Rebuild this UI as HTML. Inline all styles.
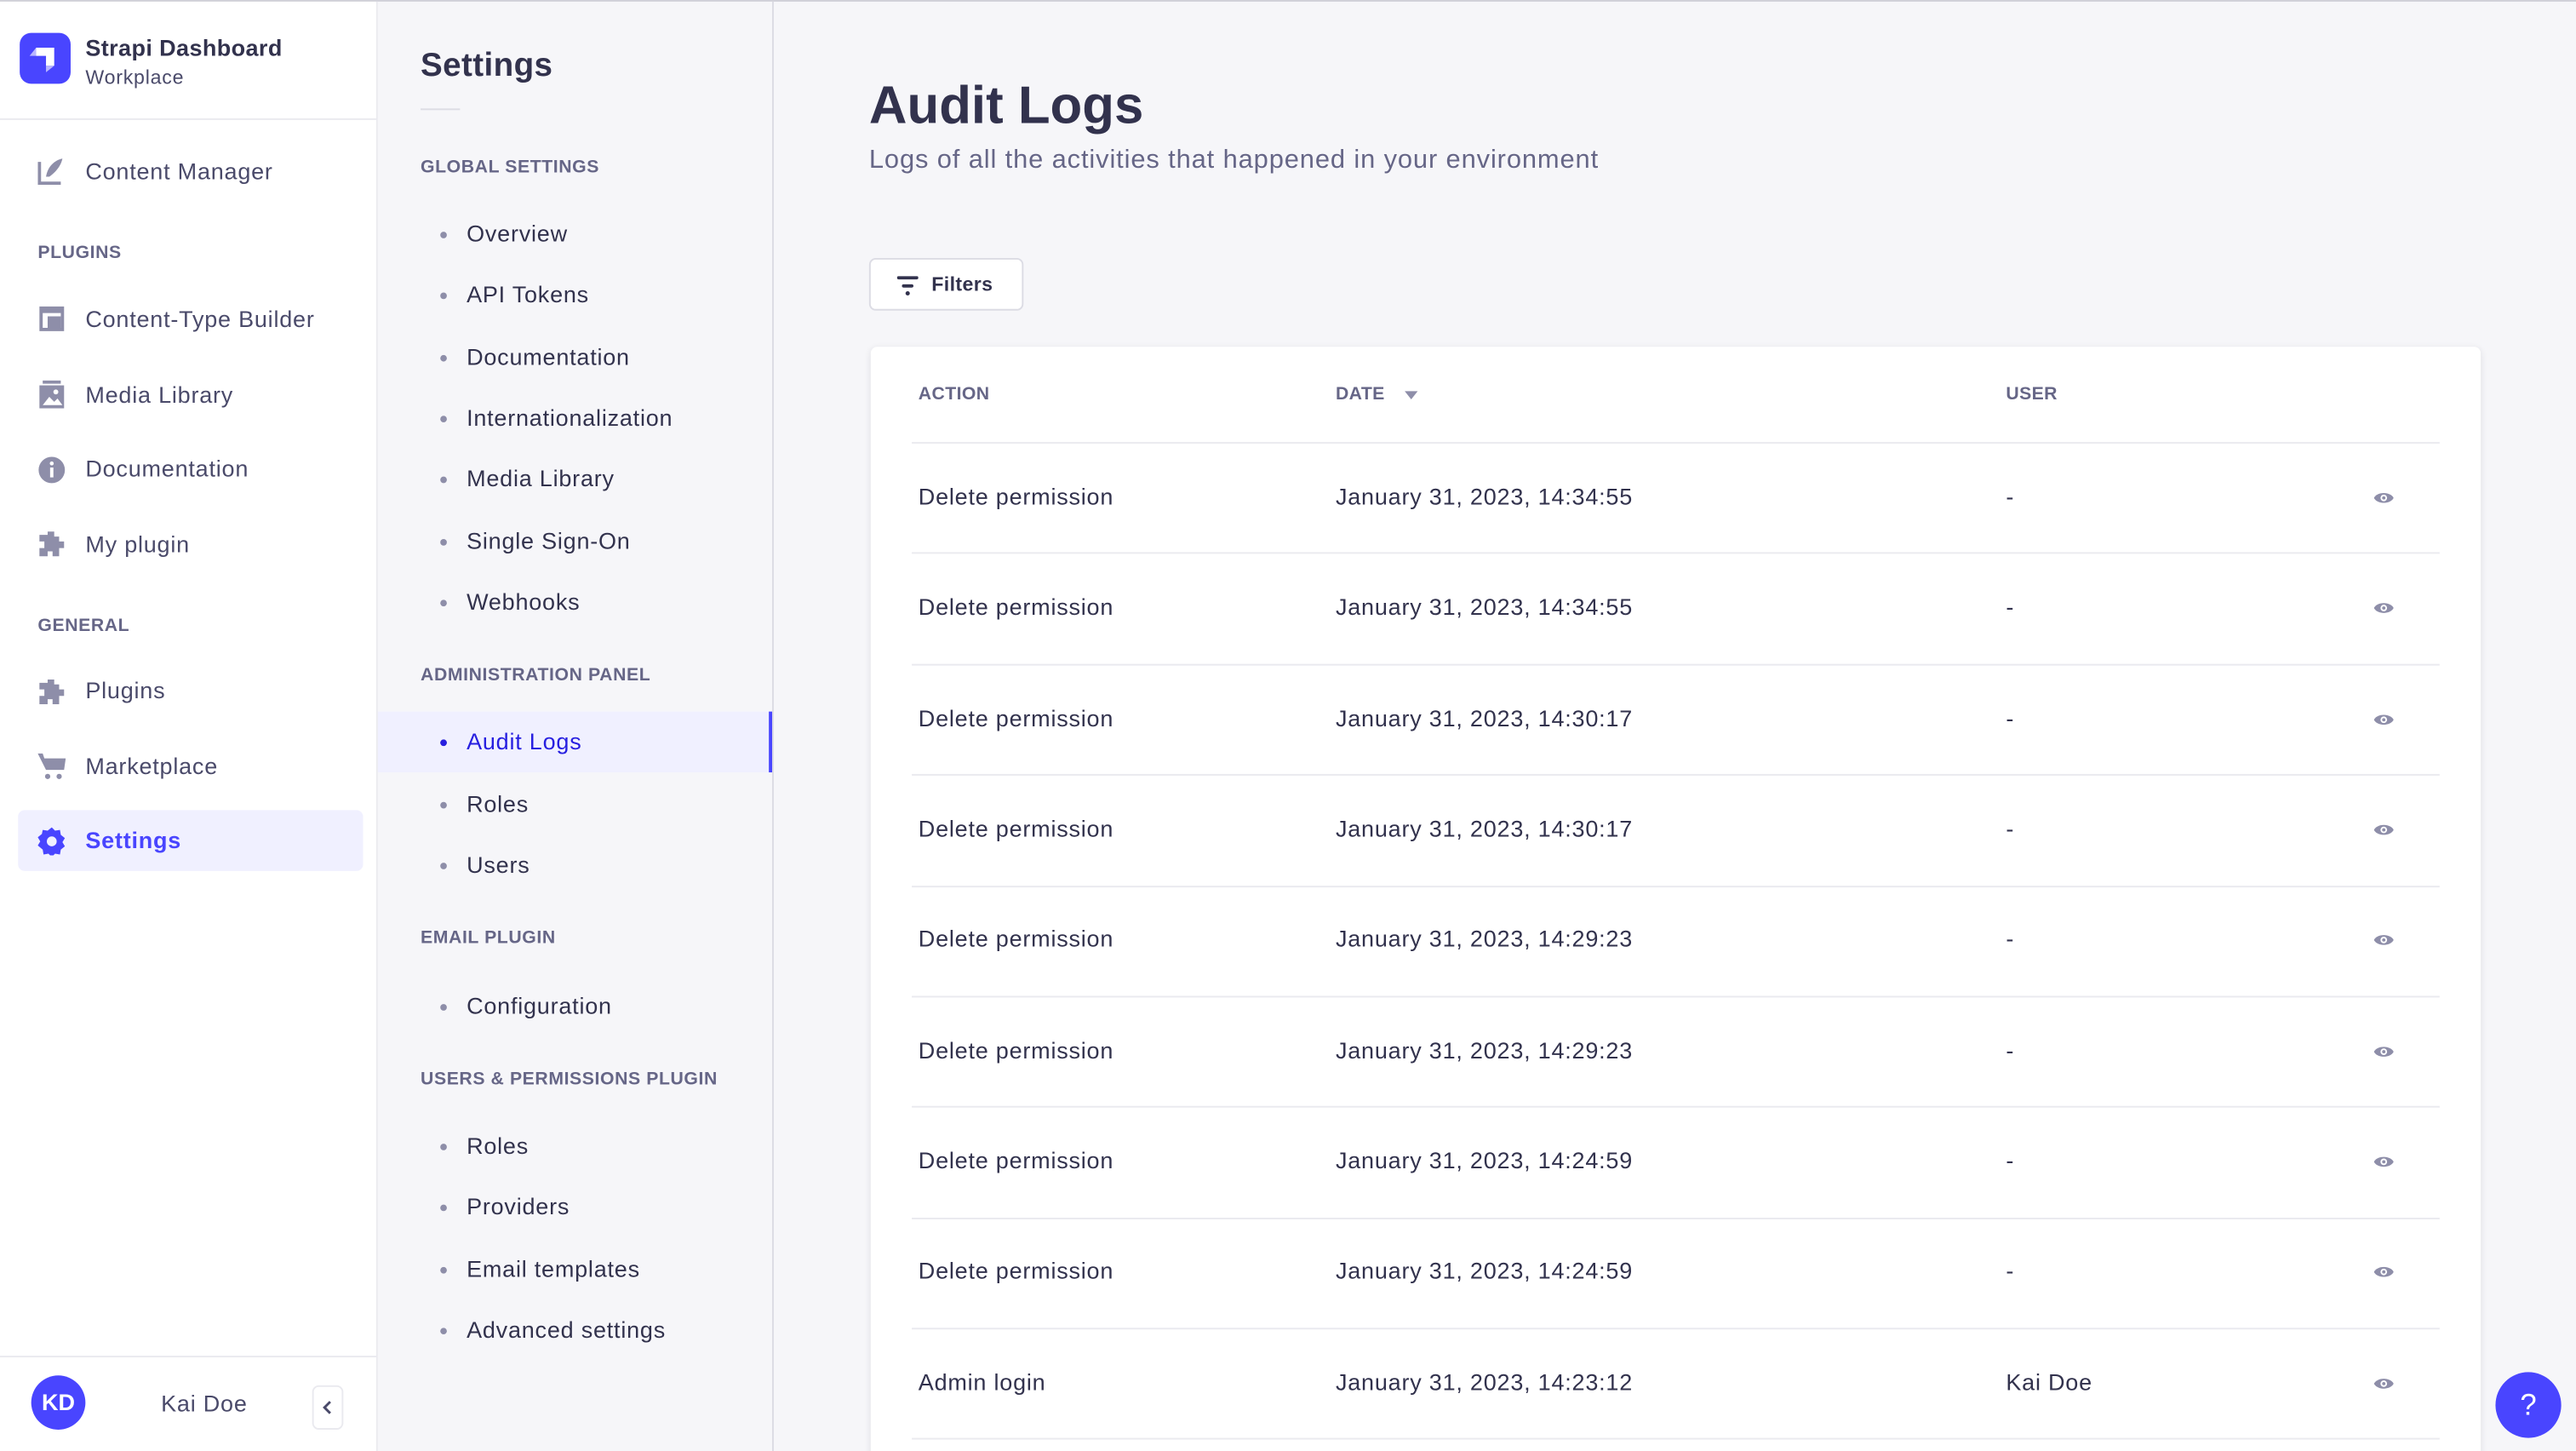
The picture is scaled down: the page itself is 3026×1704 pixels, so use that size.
<!DOCTYPE html>
<html><head><meta charset="utf-8">
<style>
*{box-sizing:border-box;margin:0;padding:0}
html,body{width:3026px;height:1704px;overflow:hidden;background:#f6f6f9}
#w{width:1568px;height:883px;transform:scale(1.92985);transform-origin:0 0;position:relative;font-family:"Liberation Sans",sans-serif;background:#f6f6f9;border-top:1px solid #d0d0d8;letter-spacing:.4px}
.a{position:absolute;white-space:nowrap}
#nav{position:absolute;left:0;top:0;width:230px;height:882px;background:#fff;border-right:1px solid #eaeaef}
.ni{position:absolute;left:52px;font-size:14px;color:#4a4a6a;transform:translateY(calc(-50% - 1px))}
.ic{position:absolute;left:23px;width:17px;height:17px;transform:translateY(-50%)}
.lab{position:absolute;font-size:11px;font-weight:bold;color:#666687;letter-spacing:.3px;transform:translateY(calc(-50% - 1px))}
#set{position:absolute;left:230px;top:0;width:241px;height:882px;background:#f6f6f9;border-right:1px solid #dcdce4}
.si{position:absolute;left:54px;font-size:14px;color:#32324d;transform:translateY(calc(-50% - 1px))}
.si:before{content:"";position:absolute;left:-16px;top:50%;width:4px;height:4px;margin-top:-1px;border-radius:50%;background:#8e8ea9}
.row{position:absolute;left:25px;right:25px;height:1px;background:#eaeaef}
.c{position:absolute;font-size:14px;color:#32324d;transform:translateY(calc(-50% - 1px))}
.h{position:absolute;font-size:11px;font-weight:bold;color:#666687;letter-spacing:.2px;transform:translateY(calc(-50% - 1px))}
.eye{position:absolute;left:915px;width:12px;height:8px;transform:translateY(-50%)}
</style></head><body><div id="w">
<div id="nav">
 <div class="a" style="left:12px;top:19px;width:31px;height:31px;border-radius:7px;background:#4945ff">
  <svg width="31" height="31" viewBox="0 0 31 31"><path d="M10 9h11v11h-5v-6h-6z" fill="#fff"/><path d="M10 9v5h-4z" fill="#b8b6ff"/><path d="M16 20h5l-5 4z" fill="#b8b6ff"/></svg>
 </div>
 <div class="a" style="left:52px;top:20px;font-size:14px;font-weight:bold;color:#32324d;letter-spacing:.2px">Strapi Dashboard</div>
 <div class="a" style="left:52px;top:39px;font-size:12px;color:#4a4a6a">Workplace</div>
 <div class="a" style="left:0;top:71px;width:229px;height:1px;background:#eaeaef"></div>
 <svg class="ic" style="top:103px" viewBox="0 0 17 17"><path d="M1 3v13h13" fill="none" stroke="#8e8ea9" stroke-width="2"/><path d="M15 1c-5 1-9 5-10 11l2 0c3-2 7-6 8-11z" fill="#8e8ea9"/></svg>
 <div class="ni" style="top:104px">Content Manager</div>
 <div class="lab" style="left:23px;top:154px">PLUGINS</div>
 <svg class="ic" style="top:193px" viewBox="0 0 17 17"><rect x="1" y="1" width="15" height="15" fill="#8e8ea9"/><rect x="3" y="5" width="11" height="9" fill="#fff"/><rect x="6" y="7" width="8" height="7" fill="#8e8ea9"/></svg>
 <div class="ni" style="top:194px">Content-Type Builder</div>
 <svg class="ic" style="top:239px" viewBox="0 0 17 17"><rect x="3" y="0" width="11" height="2" fill="#8e8ea9"/><rect x="1" y="3" width="15" height="14" fill="#8e8ea9"/><circle cx="11" cy="7" r="1.5" fill="#fff"/><path d="M3 15l4-5 3 3 2-2 3 4z" fill="#fff"/></svg>
 <div class="ni" style="top:240px">Media Library</div>
 <svg class="ic" style="top:285px" viewBox="0 0 17 17"><circle cx="8.5" cy="8.5" r="8" fill="#8e8ea9"/><rect x="7.5" y="7" width="2" height="6" fill="#fff"/><circle cx="8.5" cy="4.5" r="1.2" fill="#fff"/></svg>
 <div class="ni" style="top:285px">Documentation</div>
 <svg class="ic" style="top:330px" viewBox="0 0 17 17"><path d="M6 1h4v3h3v3h3v4h-3v5H9v-3H6v3H1v-5h3V7H1V3h5z" fill="#8e8ea9"/></svg>
 <div class="ni" style="top:331px">My plugin</div>
 <div class="lab" style="left:23px;top:381px">GENERAL</div>
 <svg class="ic" style="top:420px" viewBox="0 0 17 17"><path d="M6 1h4v3h3v3h3v4h-3v5H9v-3H6v3H1v-5h3V7H1V3h5z" fill="#8e8ea9"/></svg>
 <div class="ni" style="top:420px">Plugins</div>
 <svg class="ic" style="top:465px" viewBox="0 0 17 17"><path d="M0 1h3l1 3h13l-1 7H5z" fill="#8e8ea9"/><circle cx="6" cy="15" r="1.6" fill="#8e8ea9"/><circle cx="13" cy="15" r="1.6" fill="#8e8ea9"/></svg>
 <div class="ni" style="top:466px">Marketplace</div>
 <div class="a" style="left:11px;top:492px;width:210px;height:37px;border-radius:4px;background:#f0f0ff"></div>
 <svg class="ic" style="top:511px" viewBox="0 0 17 17"><path d="M8.5 0l2 2 3-.5.5 3 2.5 2-1.5 2.5 1.5 2.5-2.5 2-.5 3-3-.5-2 2-2-2-3 .5-.5-3L0 11l1.5-2.5L0 6l2.5-2L3 1.5l3 .5z" fill="#4945ff"/><circle cx="8.5" cy="8.5" r="3" fill="#f0f0ff"/></svg>
 <div class="ni" style="top:511px;color:#4945ff;font-weight:bold">Settings</div>
 <div class="a" style="left:0;top:824px;width:229px;height:1px;background:#eaeaef"></div>
 <div class="a" style="left:19px;top:836px;width:33px;height:33px;border-radius:50%;background:#4945ff;color:#fff;font-size:14px;font-weight:bold;text-align:center;line-height:33px;letter-spacing:0">KD</div>
 <div class="a" style="left:98px;top:845px;font-size:14px;color:#4a4a6a">Kai Doe</div>
 <div class="a" style="left:190px;top:842px;width:19px;height:27px;border:1px solid #eaeaef;border-radius:4px;background:#fff"><svg width="17" height="25" viewBox="0 0 17 25"><path d="M10 9l-3.5 3.5L10 16" fill="none" stroke="#4a4a6a" stroke-width="1.5"/></svg></div>
</div>
<div id="set">
 <div class="a" style="left:26px;top:28px;font-size:20px;font-weight:bold;color:#32324d;letter-spacing:.2px">Settings</div>
 <div class="a" style="left:26px;top:65px;width:24px;height:1px;background:#dcdce4"></div>
 <div class="lab" style="left:26px;top:102px">GLOBAL SETTINGS</div>
 <div class="si" style="top:142px">Overview</div>
 <div class="si" style="top:179px">API Tokens</div>
 <div class="si" style="top:217px">Documentation</div>
 <div class="si" style="top:254px">Internationalization</div>
 <div class="si" style="top:291px">Media Library</div>
 <div class="si" style="top:329px">Single Sign-On</div>
 <div class="si" style="top:366px">Webhooks</div>
 <div class="lab" style="left:26px;top:411px">ADMINISTRATION PANEL</div>
 <div class="a" style="left:0;top:432px;width:240px;height:37px;background:#f0f0ff;border-right:2px solid #4945ff"></div>
 <div class="si" style="top:451px;color:#271fe0">Audit Logs</div>
 <div class="a" style="left:38px;top:449px;width:4px;height:4px;border-radius:50%;background:#271fe0"></div>
 <div class="si" style="top:489px">Roles</div>
 <div class="si" style="top:526px">Users</div>
 <div class="lab" style="left:26px;top:571px">EMAIL PLUGIN</div>
 <div class="si" style="top:612px">Configuration</div>
 <div class="lab" style="left:26px;top:657px">USERS &amp; PERMISSIONS PLUGIN</div>
 <div class="si" style="top:697px">Roles</div>
 <div class="si" style="top:734px">Providers</div>
 <div class="si" style="top:772px">Email templates</div>
 <div class="si" style="top:809px">Advanced settings</div>
</div>
<div class="a" style="left:529px;top:45px;font-size:32px;font-weight:bold;color:#32324d;letter-spacing:0">Audit Logs</div>
<div class="a" style="left:529px;top:88px;font-size:16px;color:#666687;letter-spacing:.45px">Logs of all the activities that happened in your environment</div>
<div class="a" style="left:529px;top:156px;width:94px;height:32px;background:#fff;border:1px solid #dcdce4;border-radius:4px">
 <svg class="a" style="left:16px;top:10px" width="13" height="12" viewBox="0 0 13 12"><rect x="0" y="0" width="13" height="2" rx="1" fill="#32324d"/><rect x="3" y="5" width="7" height="2" rx="1" fill="#32324d"/><circle cx="6.5" cy="10.5" r="1.3" fill="#32324d"/></svg>
 <div class="a" style="left:37px;top:8px;font-size:12px;font-weight:bold;color:#32324d;letter-spacing:.2px">Filters</div>
</div>
<div class="a" style="left:530px;top:210px;width:980px;height:680px;background:#fff;border-radius:4px;box-shadow:0 1px 4px rgba(33,33,52,.1)">
 <div class="h" style="left:29px;top:30px">ACTION</div>
 <div class="h" style="left:283px;top:30px">DATE</div>
 <svg class="a" style="left:325px;top:27px" width="8" height="5" viewBox="0 0 8 5"><path d="M0 0h8L4 5z" fill="#8e8ea9"/></svg>
 <div class="h" style="left:691px;top:30px">USER</div>
 <div class="row" style="top:58px"></div>
 <div class="c" style="left:29px;top:92px">Delete permission</div><div class="c" style="left:283px;top:92px">January 31, 2023, 14:34:55</div><div class="c" style="left:691px;top:92px">-</div>
 <svg class="eye" style="top:92px" viewBox="0 0 12 8"><path d="M0 4C2 0 10 0 12 4 10 8 2 8 0 4z" fill="#8e8ea9"/><circle cx="6" cy="4" r="2" fill="#fff"/><circle cx="6" cy="4" r="1" fill="#8e8ea9"/></svg>
 <div class="row" style="top:125px"></div>
 <div class="c" style="left:29px;top:159px">Delete permission</div><div class="c" style="left:283px;top:159px">January 31, 2023, 14:34:55</div><div class="c" style="left:691px;top:159px">-</div>
 <svg class="eye" style="top:159px" viewBox="0 0 12 8"><path d="M0 4C2 0 10 0 12 4 10 8 2 8 0 4z" fill="#8e8ea9"/><circle cx="6" cy="4" r="2" fill="#fff"/><circle cx="6" cy="4" r="1" fill="#8e8ea9"/></svg>
 <div class="row" style="top:193px"></div>
 <div class="c" style="left:29px;top:227px">Delete permission</div><div class="c" style="left:283px;top:227px">January 31, 2023, 14:30:17</div><div class="c" style="left:691px;top:227px">-</div>
 <svg class="eye" style="top:227px" viewBox="0 0 12 8"><path d="M0 4C2 0 10 0 12 4 10 8 2 8 0 4z" fill="#8e8ea9"/><circle cx="6" cy="4" r="2" fill="#fff"/><circle cx="6" cy="4" r="1" fill="#8e8ea9"/></svg>
 <div class="row" style="top:260px"></div>
 <div class="c" style="left:29px;top:294px">Delete permission</div><div class="c" style="left:283px;top:294px">January 31, 2023, 14:30:17</div><div class="c" style="left:691px;top:294px">-</div>
 <svg class="eye" style="top:294px" viewBox="0 0 12 8"><path d="M0 4C2 0 10 0 12 4 10 8 2 8 0 4z" fill="#8e8ea9"/><circle cx="6" cy="4" r="2" fill="#fff"/><circle cx="6" cy="4" r="1" fill="#8e8ea9"/></svg>
 <div class="row" style="top:328px"></div>
 <div class="c" style="left:29px;top:361px">Delete permission</div><div class="c" style="left:283px;top:361px">January 31, 2023, 14:29:23</div><div class="c" style="left:691px;top:361px">-</div>
 <svg class="eye" style="top:361px" viewBox="0 0 12 8"><path d="M0 4C2 0 10 0 12 4 10 8 2 8 0 4z" fill="#8e8ea9"/><circle cx="6" cy="4" r="2" fill="#fff"/><circle cx="6" cy="4" r="1" fill="#8e8ea9"/></svg>
 <div class="row" style="top:395px"></div>
 <div class="c" style="left:29px;top:429px">Delete permission</div><div class="c" style="left:283px;top:429px">January 31, 2023, 14:29:23</div><div class="c" style="left:691px;top:429px">-</div>
 <svg class="eye" style="top:429px" viewBox="0 0 12 8"><path d="M0 4C2 0 10 0 12 4 10 8 2 8 0 4z" fill="#8e8ea9"/><circle cx="6" cy="4" r="2" fill="#fff"/><circle cx="6" cy="4" r="1" fill="#8e8ea9"/></svg>
 <div class="row" style="top:462px"></div>
 <div class="c" style="left:29px;top:496px">Delete permission</div><div class="c" style="left:283px;top:496px">January 31, 2023, 14:24:59</div><div class="c" style="left:691px;top:496px">-</div>
 <svg class="eye" style="top:496px" viewBox="0 0 12 8"><path d="M0 4C2 0 10 0 12 4 10 8 2 8 0 4z" fill="#8e8ea9"/><circle cx="6" cy="4" r="2" fill="#fff"/><circle cx="6" cy="4" r="1" fill="#8e8ea9"/></svg>
 <div class="row" style="top:530px"></div>
 <div class="c" style="left:29px;top:563px">Delete permission</div><div class="c" style="left:283px;top:563px">January 31, 2023, 14:24:59</div><div class="c" style="left:691px;top:563px">-</div>
 <svg class="eye" style="top:563px" viewBox="0 0 12 8"><path d="M0 4C2 0 10 0 12 4 10 8 2 8 0 4z" fill="#8e8ea9"/><circle cx="6" cy="4" r="2" fill="#fff"/><circle cx="6" cy="4" r="1" fill="#8e8ea9"/></svg>
 <div class="row" style="top:597px"></div>
 <div class="c" style="left:29px;top:631px">Admin login</div><div class="c" style="left:283px;top:631px">January 31, 2023, 14:23:12</div><div class="c" style="left:691px;top:631px">Kai Doe</div>
 <svg class="eye" style="top:631px" viewBox="0 0 12 8"><path d="M0 4C2 0 10 0 12 4 10 8 2 8 0 4z" fill="#8e8ea9"/><circle cx="6" cy="4" r="2" fill="#fff"/><circle cx="6" cy="4" r="1" fill="#8e8ea9"/></svg>
 <div class="row" style="top:664px"></div>
</div>
<div class="a" style="left:1519px;top:834px;width:40px;height:40px;border-radius:50%;background:#4945ff;color:#fff;font-size:18px;text-align:center;line-height:40px;letter-spacing:0">?</div>
</div></body></html>
